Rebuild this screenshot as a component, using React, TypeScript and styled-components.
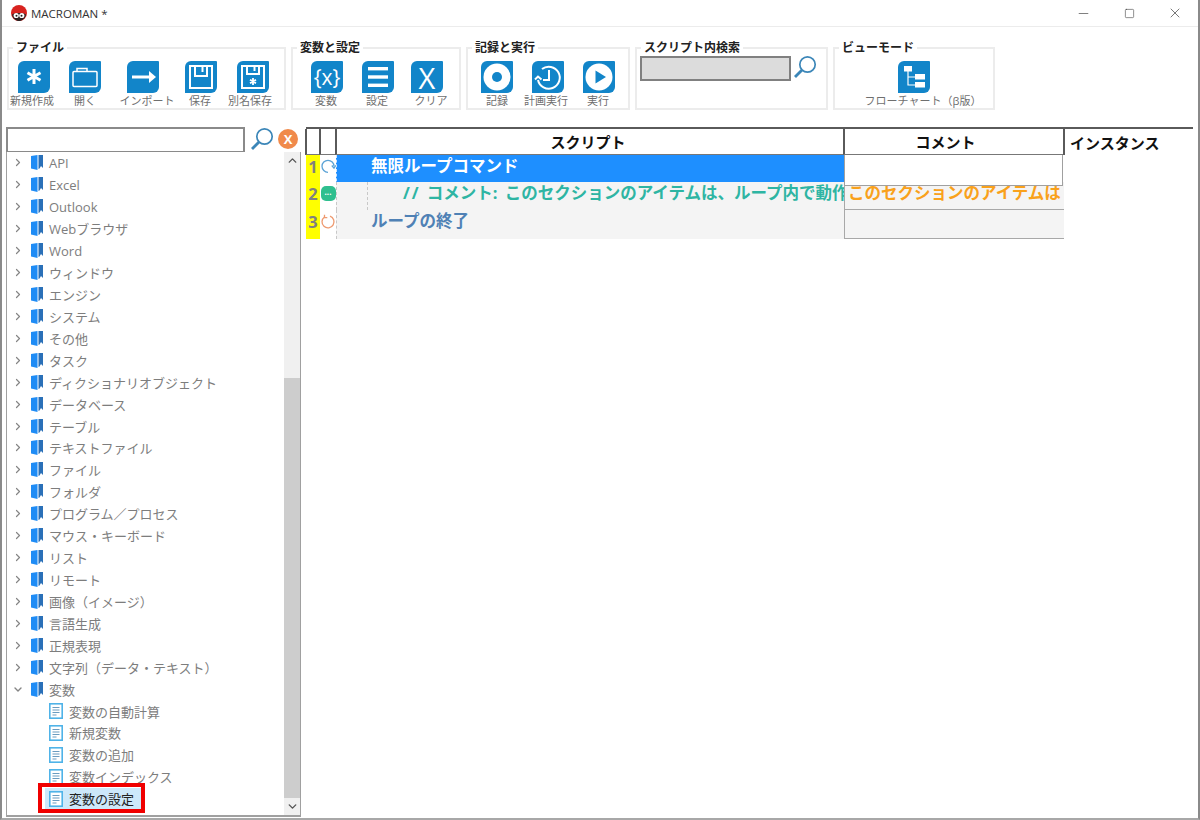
import React from 'react'
import styled, { createGlobalStyle } from 'styled-components'
import { ChevronRight, ChevronDown, ChevronUp, Minus, Square, X } from 'lucide-react'

const GlobalStyle = createGlobalStyle`
  html, body {
    margin: 0;
    padding: 0;
    background: #fff;
  }
  * {
    box-sizing: border-box;
  }
`

const FONT = `"Open Sans", "Noto Sans CJK JP", sans-serif`
const BLUE = '#1285c9'
const COLUMNS = '14px 16px 508px 220px 1fr'

const Page = styled.div`
  width: 1200px;
  height: 820px;
  display: flex;
  flex-direction: column;
  overflow: hidden;
  background: #fff;
  font-family: ${FONT};
  border-left: 2px solid #8a8a8a;
  border-right: 2px solid #8a8a8a;
  border-bottom: 2px solid #a8a8a8;
`

const TitleBar = styled.div`
  height: 27px;
  flex: none;
  display: flex;
  align-items: center;
  padding-left: 9px;
  border-bottom: 1px solid #ececec;
`

const AppTitle = styled.span`
  margin-left: 4px;
  font-size: 11.5px;
  color: #333;
  flex: 1;
`

const WindowButton = styled.div`
  width: 46px;
  height: 26px;
  display: flex;
  align-items: center;
  justify-content: center;
  color: #333;
`

const Toolbar = styled.div`
  height: 100px;
  flex: none;
  display: flex;
  gap: 5px;
  padding: 14px 0 0 5px;
`

const Group = styled.fieldset<{ $w: number }>`
  width: ${(p) => p.$w}px;
  height: 69px;
  margin: 0;
  padding: 0;
  display: flex;
  border: 2px solid #ececec;
  min-inline-size: 0;
`

const GroupTitle = styled.legend`
  margin-left: 4px;
  padding: 0 3px;
  font-size: 12px;
  line-height: 14px;
  font-weight: 600;
  color: #222;
`

const ToolRow = styled.div<{ $left?: number }>`
  display: flex;
  width: 100%;
  padding: 6px 0 0 ${(p) => p.$left || 0}px;
`

const ToolButton = styled.div<{ $w?: number }>`
  width: ${(p) => (p.$w ? `${p.$w}px` : '100%')};
  display: flex;
  flex-direction: column;
  align-items: center;
`

const Tile = styled.div`
  width: 32px;
  height: 32px;
  display: flex;
  align-items: center;
  justify-content: center;
  background: ${BLUE};
  border-radius: 6px 1px 6px 0;
  color: #fff;
  overflow: hidden;
`

const TileLetter = styled.span<{ $size: number; $weight: number }>`
  font-family: "Open Sans", sans-serif;
  font-size: ${(p) => p.$size}px;
  line-height: 1;
  font-weight: ${(p) => p.$weight};
`

const ToolLabel = styled.span<{ $nudge?: number }>`
  margin-top: 1px;
  font-size: 11px;
  line-height: 14px;
  white-space: nowrap;
  color: #6f6f6f;
  transform: translateX(${(p) => p.$nudge || 0}px);
`

const FindRow = styled.div`
  display: flex;
  align-items: flex-start;
  gap: 2px;
`

const FindInput = styled.div`
  width: 151px;
  height: 25px;
  margin: 1px 0 0 3px;
  flex: none;
  background: #dcdcdc;
  border: 2px solid #808080;
`

const Content = styled.div`
  flex: 1;
  min-height: 0;
  display: flex;
  padding-left: 4px;
`

const LeftPane = styled.div`
  width: 295px;
  flex: none;
  display: flex;
  flex-direction: column;
`

const TreeSearch = styled.div`
  height: 25px;
  flex: none;
  display: flex;
  align-items: flex-start;
  gap: 5px;
`

const TreeInput = styled.div`
  width: 239px;
  height: 25px;
  border: 2px solid #8a8a8a;
  border-bottom-width: 1px;
  flex: none;
`

const ClearButton = styled.div`
  width: 20px;
  height: 20px;
  margin: 2px 0 0 -1px;
  border-radius: 50%;
  background: #f08a4b;
  color: #fff;
  font-size: 13px;
  line-height: 20px;
  font-weight: 700;
  text-align: center;
`

const TreeBox = styled.div`
  height: 665px;
  flex: none;
  display: flex;
  border-style: solid;
  border-width: 0 1px 2px 1px;
  border-color: #a0a0a0;
  overflow: hidden;
`

const TreeList = styled.div`
  flex: 1;
  min-width: 0;
`

const TreeRow = styled.div<{ $child?: boolean }>`
  position: relative;
  height: 21.93px;
  display: flex;
  align-items: center;
  padding-left: ${(p) => (p.$child ? 42 : 5)}px;
`

const Arrow = styled.span`
  width: 12px;
  display: flex;
  justify-content: center;
  color: #858585;
  margin-right: 7px;
`

const TreeText = styled.span<{ $dark?: boolean }>`
  margin-left: 6px;
  font-size: 13px;
  white-space: nowrap;
  color: ${(p) => (p.$dark ? '#222' : '#7d7d7d')};
`

const SelectedBack = styled.span`
  position: absolute;
  left: 38px;
  top: 0;
  width: 99px;
  height: 100%;
  background: #cde8fa;
`

const RedMark = styled.span`
  position: absolute;
  left: 31px;
  top: -5px;
  width: 107px;
  height: 30px;
  border: 4px solid #f00000;
`

const RowInner = styled.span`
  position: relative;
  display: flex;
  align-items: center;
`

const Scrollbar = styled.div`
  width: 16px;
  flex: none;
  display: flex;
  flex-direction: column;
  background: #f0f0f0;
`

const ScrollEnd = styled.div`
  height: 17px;
  flex: none;
  display: flex;
  align-items: center;
  justify-content: center;
  color: #555;
`

const ScrollSpace = styled.div`
  height: 209px;
  flex: none;
`

const ScrollThumb = styled.div`
  flex: 1;
  background: #cdcdcd;
`

const RightPane = styled.div`
  flex: 1;
  min-width: 0;
  margin: 0 5px;
`

const HeaderRow = styled.div`
  height: 28px;
  display: grid;
  grid-template-columns: ${COLUMNS};
  border-top: 2px solid #5a5a5a;
`

const HeadCell = styled.div<{ $left?: boolean; $open?: boolean; $endGap?: number }>`
  margin-left: -1px;
  display: flex;
  align-items: center;
  justify-content: ${(p) => (p.$left ? 'flex-start' : 'center')};
  padding-left: ${(p) => (p.$left ? 5 : 0)}px;
  padding-right: ${(p) => p.$endGap || 0}px;
  border-left: 2px solid #5a5a5a;
  border-bottom: ${(p) => (p.$open ? 'none' : '1px solid #777')};
  font-size: 15px;
  font-weight: 700;
  color: #111;
`

const ScriptRow = styled.div<{ $h: number }>`
  height: ${(p) => p.$h}px;
  display: grid;
  grid-template-columns: ${COLUMNS};
`

const NumCell = styled.div`
  background: #ffff00;
  color: #808080;
  font-size: 16.500px;
  font-weight: 700;
  text-align: center;
  line-height: 23px;
`

const IconCell = styled.div`
  display: flex;
  justify-content: center;
  padding-top: 4px;
`

const ScriptCell = styled.div<{ $active?: boolean; $indent: number; $color: string }>`
  display: flex;
  align-items: flex-start;
  padding-left: ${(p) => p.$indent}px;
  background: ${(p) => (p.$active ? '#1e8fff' : '#f4f4f4')};
  color: ${(p) => p.$color};
  border-left: 1px dashed ${(p) => (p.$active ? '#cfe6ff' : '#c8c8c8')};
  font-size: 16.500px;
  line-height: 22px;
  font-weight: 700;
  white-space: nowrap;
  overflow: hidden;
`

const IndentGuide = styled.span`
  height: 28px;
  margin-right: 35px;
  border-left: 1px dashed #c8c8c8;
`

const CommentLine = styled.span`
  word-spacing: 3px;
`

const Slashes = styled.span`
  margin-right: 6px;
  letter-spacing: 2px;
`

const CommentCell = styled.div`
  background: #f4f4f4;
  border-left: 1px solid #a8a8a8;
  border-bottom: 1px solid #a8a8a8;
  padding-left: 3px;
  color: #f9a11b;
  font-size: 16.500px;
  line-height: 22px;
  font-weight: 700;
  white-space: nowrap;
  overflow: hidden;
`

// the first row's comment is open for editing, so its box hangs over the next row
const EditCell = styled.div`
  position: relative;
  z-index: 1;
  height: 31px;
  background: #fff;
  border: 1px solid #a0a0a0;
  border-top: none;
  margin-right: 1px;
`

const MoreBadge = styled.div`
  width: 15px;
  height: 15px;
  border-radius: 5px;
  background: #2fbf8f;
  color: #fff;
  font-size: 8px;
  line-height: 12px;
  font-weight: 700;
  text-align: center;
`

const GlyphSvg = styled.svg`
  flex: none;
`

const Tools = {
  asterisk: (
    <svg width="32" height="32" viewBox="0 0 32 32" fill="none" stroke="#fff" strokeWidth="3">
      <path d="M16 8v15M9.500 11.800l13 7.400M22.500 11.800l-13 7.400" />
    </svg>
  ),
  folder: (
    <svg width="32" height="32" viewBox="0 0 32 32" fill="none" stroke="#fff" strokeWidth="1.500">
      <rect x="4" y="10.500" width="24" height="15" rx="1" />
      <path d="M8 10.500V7.500h10v3" />
    </svg>
  ),
  arrow: (
    <svg width="32" height="32" viewBox="0 0 32 32" fill="#fff">
      <rect x="5" y="14.500" width="19" height="3" />
      <path d="M22 10l7 6-7 6z" />
    </svg>
  ),
  save: (
    <svg width="32" height="32" viewBox="0 0 32 32" fill="none" stroke="#fff" strokeWidth="2">
      <rect x="5" y="5" width="22" height="22" />
      <path d="M10 5v10h12V5M17.500 5v6" />
    </svg>
  ),
  saveAs: (
    <svg width="32" height="32" viewBox="0 0 32 32" fill="none" stroke="#fff" strokeWidth="2">
      <rect x="5" y="5" width="22" height="22" />
      <path d="M10 5v8h12V5M17.500 5v5" />
      <path d="M16 17v7M13 18.700l6 3.600M19 18.700l-6 3.600" strokeWidth="1.800" />
    </svg>
  ),
  lines: (
    <svg width="32" height="32" viewBox="0 0 32 32" fill="#fff">
      <rect x="6" y="6" width="20" height="3.400" />
      <rect x="6" y="14.300" width="20" height="3.400" />
      <rect x="6" y="22.600" width="20" height="3.400" />
    </svg>
  ),
  record: (
    <svg width="32" height="32" viewBox="0 0 32 32">
      <circle cx="16" cy="16" r="13.500" fill="#fff" />
      <circle cx="16" cy="16" r="5" fill={BLUE} />
    </svg>
  ),
  schedule: (
    <svg width="32" height="32" viewBox="0 0 32 32" fill="none" stroke="#fff" strokeWidth="2">
      <path d="M10 8A11 11 0 1 1 6 19" />
      <path d="M3 18.500l3-3 3.500 3" />
      <path d="M17 9v10h-6" />
    </svg>
  ),
  play: (
    <svg width="32" height="32" viewBox="0 0 32 32">
      <circle cx="16" cy="16" r="13.500" fill="#fff" />
      <path d="M12.500 9.500L23 16l-10.500 6.500z" fill={BLUE} />
    </svg>
  ),
  flow: (
    <svg width="32" height="32" viewBox="0 0 32 32" fill="none">
      <rect x="6" y="5" width="8" height="5.500" fill="#fff" />
      <rect x="17" y="13" width="10" height="5.500" fill="#fff" />
      <rect x="17" y="21" width="10" height="5.500" fill="#fff" />
      <path d="M10 10v14h7M10 16h7" stroke="#fff" strokeWidth="1.200" />
    </svg>
  ),
}

const Lens = () => (
  <GlyphSvg width="24" height="24" viewBox="0 0 24 24" fill="none" stroke="#3b86b8">
    <circle cx="14.500" cy="9.500" r="7.700" strokeWidth="1.700" />
    <path d="M9 15L2 22" strokeWidth="2.800" />
  </GlyphSvg>
)

const Logo = () => (
  <GlyphSvg width="16" height="16" viewBox="0 0 16 16">
    <circle cx="8" cy="8" r="8" fill="#d8231f" />
    <path d="M1 9.500c2-1.500 4-1.500 7-1.500s5 0 7 1.500C14.300 13.500 11 16 8 16s-6.300-2.500-7-6.500z" fill="#2b2020" />
    <circle cx="5.200" cy="10.500" r="2.600" fill="#fff" />
    <circle cx="10.800" cy="10.500" r="2.600" fill="#fff" />
    <circle cx="5.500" cy="10.800" r="1" fill="#222" />
    <circle cx="10.500" cy="10.800" r="1" fill="#222" />
  </GlyphSvg>
)

const BookIcon = () => (
  <GlyphSvg width="12" height="15" viewBox="0 0 12 15">
    <path d="M0 1L6.500 0v15L0 13.500z" fill="#1f8cf5" />
    <path d="M7.500 0H12v13l-2-2-1.500 2.500-1 .5z" fill="#2a70b8" />
  </GlyphSvg>
)

const DocIcon = () => (
  <GlyphSvg width="14" height="16" viewBox="0 0 14 16" fill="none">
    <rect x="0.800" y="0.800" width="12.400" height="14.400" fill="#fff" stroke="#4fb3e8" strokeWidth="1.600" />
    <path d="M3.500 4.500h7M3.500 7h7M3.500 9.500h7M3.500 12h4" stroke="#6a9cc0" strokeWidth="1.100" />
  </GlyphSvg>
)

const LoopStart = () => (
  <GlyphSvg width="15" height="15" viewBox="0 0 15 15" fill="none" stroke="#5ba3d6" strokeWidth="1.300">
    <path d="M7 13.300A6 6 0 1 1 13 7.300" />
    <path d="M10.800 6.500l2.200 2.600 1.800-2.800" />
  </GlyphSvg>
)

const LoopEnd = () => (
  <GlyphSvg width="15" height="15" viewBox="0 0 15 15" fill="none" stroke="#ee9a70" strokeWidth="1.300">
    <path d="M9 2.200A6 6 0 1 1 3.500 3" />
    <path d="M3.500 0.800V3.600H6.300" />
  </GlyphSvg>
)

const groups = [
  'API',
  'Excel',
  'Outlook',
  'Webブラウザ',
  'Word',
  'ウィンドウ',
  'エンジン',
  'システム',
  'その他',
  'タスク',
  'ディクショナリオブジェクト',
  'データベース',
  'テーブル',
  'テキストファイル',
  'ファイル',
  'フォルダ',
  'プログラム／プロセス',
  'マウス・キーボード',
  'リスト',
  'リモート',
  '画像（イメージ）',
  '言語生成',
  '正規表現',
  '文字列（データ・テキスト）',
]

const children = ['変数の自動計算', '新規変数', '変数の追加', '変数インデックス']

export default function App() {
  return (
    <>
      <GlobalStyle />
      <Page>
        <TitleBar>
          <Logo />
          <AppTitle>MACROMAN *</AppTitle>
          <WindowButton><Minus size={15} strokeWidth={1} /></WindowButton>
          <WindowButton><Square size={11} strokeWidth={1.200} /></WindowButton>
          <WindowButton><X size={16} strokeWidth={1} /></WindowButton>
        </TitleBar>

        <Toolbar>
          <Group $w={279}>
            <GroupTitle>ファイル</GroupTitle>
            <ToolRow>
              <ToolButton $w={50}><Tile>{Tools.asterisk}</Tile><ToolLabel $nudge={-2}>新規作成</ToolLabel></ToolButton>
              <ToolButton $w={52}><Tile>{Tools.folder}</Tile><ToolLabel>開く</ToolLabel></ToolButton>
              <ToolButton $w={64}><Tile>{Tools.arrow}</Tile><ToolLabel $nudge={4}>インポート</ToolLabel></ToolButton>
              <ToolButton $w={52}><Tile>{Tools.save}</Tile><ToolLabel $nudge={-1}>保存</ToolLabel></ToolButton>
              <ToolButton $w={52}><Tile>{Tools.saveAs}</Tile><ToolLabel $nudge={-3}>別名保存</ToolLabel></ToolButton>
            </ToolRow>
          </Group>

          <Group $w={170}>
            <GroupTitle>変数と設定</GroupTitle>
            <ToolRow $left={9}>
              <ToolButton $w={50}><Tile><TileLetter $size={21} $weight={400}>{'{x}'}</TileLetter></Tile><ToolLabel $nudge={-1}>変数</ToolLabel></ToolButton>
              <ToolButton $w={52}><Tile>{Tools.lines}</Tile><ToolLabel $nudge={-1}>設定</ToolLabel></ToolButton>
              <ToolButton $w={46}><Tile><TileLetter $size={29} $weight={500}>X</TileLetter></Tile><ToolLabel $nudge={4}>クリア</ToolLabel></ToolButton>
            </ToolRow>
          </Group>

          <Group $w={164}>
            <GroupTitle>記録と実行</GroupTitle>
            <ToolRow $left={4}>
              <ToolButton $w={50}><Tile>{Tools.record}</Tile><ToolLabel>記録</ToolLabel></ToolButton>
              <ToolButton $w={52}><Tile>{Tools.schedule}</Tile><ToolLabel $nudge={-2}>計画実行</ToolLabel></ToolButton>
              <ToolButton $w={50}><Tile>{Tools.play}</Tile><ToolLabel $nudge={-1}>実行</ToolLabel></ToolButton>
            </ToolRow>
          </Group>

          <Group $w={193}>
            <GroupTitle>スクリプト内検索</GroupTitle>
            <FindRow>
              <FindInput />
              <Lens />
            </FindRow>
          </Group>

          <Group $w={162}>
            <GroupTitle>ビューモード</GroupTitle>
            <ToolRow>
              <ToolButton><Tile>{Tools.flow}</Tile><ToolLabel $nudge={9}>フローチャート（β版）</ToolLabel></ToolButton>
            </ToolRow>
          </Group>
        </Toolbar>

        <Content>
          <LeftPane>
            <TreeSearch>
              <TreeInput />
              <Lens />
              <ClearButton>X</ClearButton>
            </TreeSearch>
            <TreeBox>
              <TreeList>
                {groups.map((name) => (
                  <TreeRow key={name}>
                    <Arrow><ChevronRight size={13} strokeWidth={2.400} /></Arrow>
                    <BookIcon />
                    <TreeText>{name}</TreeText>
                  </TreeRow>
                ))}
                <TreeRow>
                  <Arrow><ChevronDown size={13} strokeWidth={2.800} /></Arrow>
                  <BookIcon />
                  <TreeText>変数</TreeText>
                </TreeRow>
                {children.map((name) => (
                  <TreeRow $child key={name}>
                    <DocIcon />
                    <TreeText>{name}</TreeText>
                  </TreeRow>
                ))}
                <TreeRow $child>
                  <SelectedBack />
                  <RowInner>
                    <DocIcon />
                    <TreeText $dark>変数の設定</TreeText>
                  </RowInner>
                  <RedMark />
                </TreeRow>
              </TreeList>
              <Scrollbar>
                <ScrollEnd><ChevronUp size={13} strokeWidth={2.600} /></ScrollEnd>
                <ScrollSpace />
                <ScrollThumb />
                <ScrollEnd><ChevronDown size={13} strokeWidth={2.600} /></ScrollEnd>
              </Scrollbar>
            </TreeBox>
          </LeftPane>

          <RightPane>
            <HeaderRow>
              <HeadCell />
              <HeadCell />
              <HeadCell $endGap={5}>スクリプト</HeadCell>
              <HeadCell $endGap={18}>コメント</HeadCell>
              <HeadCell $left $open>インスタンス</HeadCell>
            </HeaderRow>
            <ScriptRow $h={27}>
              <NumCell>1</NumCell>
              <IconCell><LoopStart /></IconCell>
              <ScriptCell $active $indent={34} $color="#fff">無限ループコマンド</ScriptCell>
              <EditCell />
            </ScriptRow>
            <ScriptRow $h={28}>
              <NumCell>2</NumCell>
              <IconCell><MoreBadge>...</MoreBadge></IconCell>
              <ScriptCell $indent={30} $color="#2eb5a3">
                <IndentGuide />
                <CommentLine><Slashes>//</Slashes>コメント: このセクションのアイテムは、ループ内で動作します</CommentLine>
              </ScriptCell>
              <CommentCell>このセクションのアイテムは</CommentCell>
            </ScriptRow>
            <ScriptRow $h={29}>
              <NumCell>3</NumCell>
              <IconCell><LoopEnd /></IconCell>
              <ScriptCell $indent={34} $color="#4f81b5">ループの終了</ScriptCell>
              <CommentCell />
            </ScriptRow>
          </RightPane>
        </Content>
      </Page>
    </>
  )
}
